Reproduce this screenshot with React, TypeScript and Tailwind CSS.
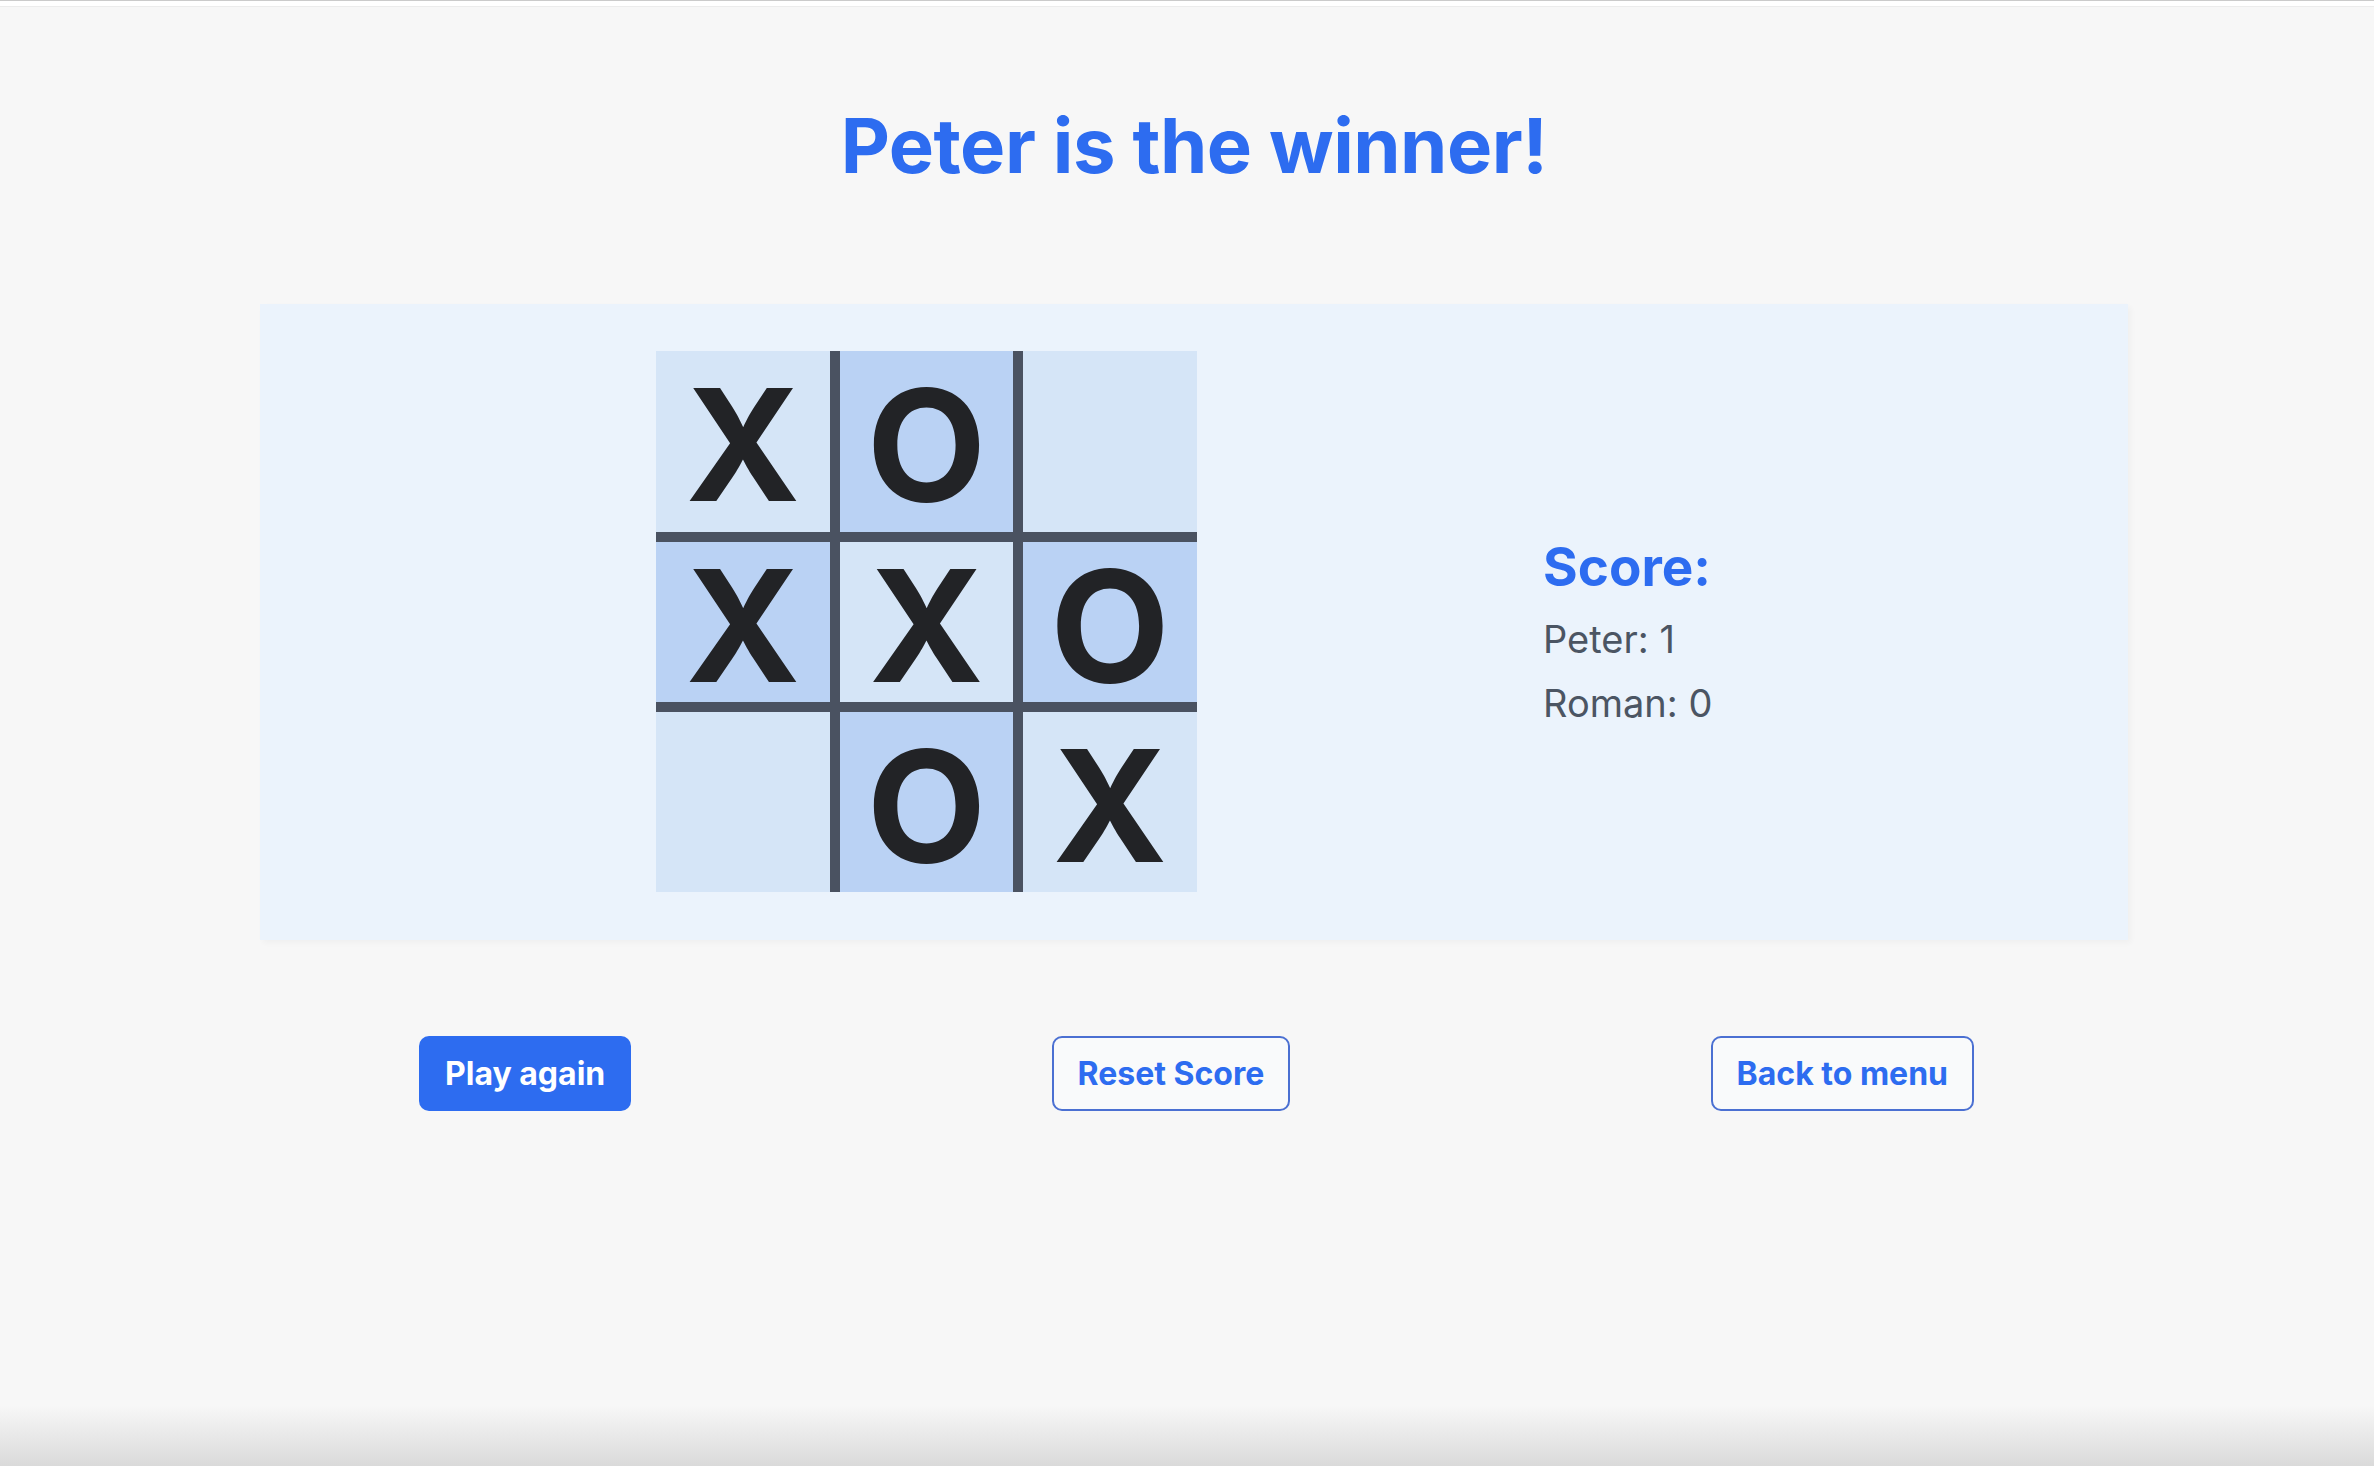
import React from 'react';

type Mark = 'X' | 'O' | '';

const BOARD: Mark[] = ['X', 'O', '', 'X', 'X', 'O', '', 'O', 'X'];

function Cell({ mark, index }: { mark: Mark; index: number }) {
  const row = Math.floor(index / 3);
  const col = index % 3;
  const shaded = (row + col) % 2 === 1;

  return (
    <div
      className={[
        'flex items-center justify-center pt-[6px] border-[#4a5261]',
        shaded ? 'bg-[#bad2f4]' : 'bg-[#d5e5f7]',
        col === 1 ? 'border-x-[10px]' : '',
        row === 1 ? 'border-y-[10px]' : '',
      ].join(' ')}
    >
      <span className="text-[155px] leading-none font-bold text-[#222326]">{mark}</span>
    </div>
  );
}

function Board() {
  return (
    <div className="grid grid-cols-[174px_193px_174px] grid-rows-[181px_180px_180px]">
      {BOARD.map((mark, i) => (
        <Cell key={i} mark={mark} index={i} />
      ))}
    </div>
  );
}

function Score() {
  return (
    <div className="mt-[186px] flex flex-col">
      <h2 className="text-[53px] leading-[60px] font-bold text-[#2d6cf0] mb-[10px]">Score:</h2>
      <p className="text-[38px] leading-[64px] text-[#4b5563]">Peter: 1</p>
      <p className="text-[38px] leading-[64px] text-[#4b5563]">Roman: 0</p>
    </div>
  );
}

export default function App() {
  return (
    <div
      className="w-full h-[1466px] flex flex-col bg-[#f7f7f7] overflow-hidden"
      style={{ fontFamily: 'Inter, "Noto Sans", sans-serif' }}
    >
      <div className="h-px bg-[#cbcbcb]" />
      <div className="h-[5px] bg-white" />
      <div className="h-px bg-[#ececec]" />

      <div className="ml-[260px] w-[1868px] flex flex-col pt-[100px]">
        <h1 className="text-center text-[76px] leading-[76px] font-bold tracking-[-0.5px] text-[#2d6cf0]">
          Peter is the winner!
        </h1>

        <div className="mt-[121px] h-[636px] bg-[#ebf3fc] flex items-start pt-[47px] pl-[396px] gap-[346px] shadow-[3px_3px_6px_rgba(0,0,0,0.03)]">
          <Board />
          <Score />
        </div>

        <div className="mt-[96px] flex justify-between pl-[159px] pr-[154px]">
          <button className="h-[75px] px-[26px] rounded-[10px] bg-[#2d6cf0] text-white text-[32px] font-bold">
            Play again
          </button>
          <button className="h-[75px] px-[24px] rounded-[10px] border-2 border-[#4b70d2] bg-[#f9fafb] text-[#2d6cf0] text-[32px] font-bold">
            Reset Score
          </button>
          <button className="h-[75px] px-[24px] rounded-[10px] border-2 border-[#4b70d2] bg-[#f9fafb] text-[#2d6cf0] text-[32px] font-bold">
            Back to menu
          </button>
        </div>
      </div>

      <div className="mt-auto h-[60px] bg-gradient-to-b from-[#f7f7f7] to-[#dadada]" />
    </div>
  );
}
